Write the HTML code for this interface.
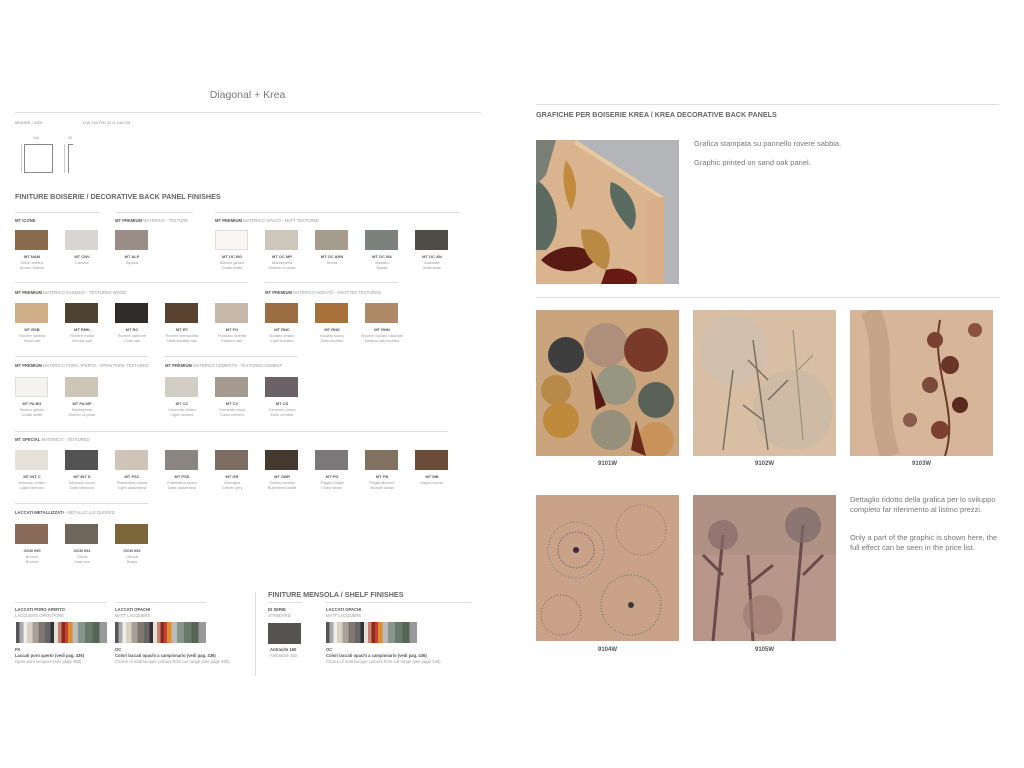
<!DOCTYPE html>
<html><head><meta charset="utf-8"><style>
*{margin:0;padding:0;box-sizing:border-box}
body{width:1024px;height:768px;background:#fff;position:relative;overflow:hidden;font-family:"Liberation Sans",sans-serif;color:#666}
.a{position:absolute}
.ln{position:absolute;height:1px;background:#ddd}
.t{position:absolute;font-size:4px;line-height:5px;color:#888;white-space:nowrap}
.lb{position:absolute;font-size:4.2px;color:#999;white-space:nowrap}
.lb b{color:#555}
.sw{position:absolute;width:33px;height:20px}
.cd{position:absolute;width:50px;margin-left:-8px;text-align:center;font-size:4px;line-height:5.5px;color:#999}
.cd b{color:#555;display:block}
.strip{position:absolute;height:21px;background:linear-gradient(90deg,#555 0 4%,#aaa 4% 8%,#eee 8% 12%,#d8d0c0 12% 18%,#a8a098 18% 25%,#807870 25% 32%,#666 32% 38%,#333 38% 42%,#e6e0d6 42% 46%,#c88070 46% 50%,#8a2a20 50% 54%,#c84030 54% 57%,#d89030 57% 62%,#bbb 62% 68%,#88958a 68% 76%,#6a7a6a 76% 84%,#556655 84% 92%,#999 92% 100%)}
.img{position:absolute;width:143px;height:146px;overflow:hidden}
.cap{position:absolute;font-size:6px;font-weight:bold;color:#555;width:143px;text-align:center}
.rt{position:absolute;font-size:7.5px;color:#777;line-height:10px}
</style></head><body>
<div class="a" style="left:0;top:89px;width:495px;text-align:center;font-size:10.5px;color:#777">Diagonal + Krea</div>
<div class="ln" style="left:15px;top:112px;width:466px"></div>
<div class="t" style="left:15px;top:120px">MISURE / SIZE</div>
<div class="t" style="left:83px;top:120px">L/W 144 P/D 22 H 144 CM</div>
<div class="t" style="left:33px;top:136px;font-size:3.5px">144</div>
<div class="t" style="left:68px;top:136px;font-size:3.5px">22</div>
<div class="a" style="left:24px;top:144px;width:29px;height:29px;border:1px solid #888"></div>
<div class="a" style="left:68px;top:144px;width:5px;height:29px;border-left:1px solid #888;border-top:1px solid #888"></div>
<div class="a" style="left:21px;top:144px;width:1px;height:29px;background:#ccc"></div>
<div class="a" style="left:64px;top:144px;width:1px;height:29px;background:#ccc"></div>
<div class="a" style="left:15px;top:192px;font-size:7.2px;font-weight:bold;color:#666">FINITURE BOISERIE / DECORATIVE BACK PANEL FINISHES</div>

<div class="ln" style="left:15px;top:212px;width:85px"></div>
<div class="ln" style="left:115px;top:212px;width:78px"></div>
<div class="ln" style="left:215px;top:212px;width:244px"></div>
<div class="lb" style="left:15px;top:218px"><b>MT ICONE</b></div>
<div class="lb" style="left:115px;top:218px"><b>MT PREMIUM</b> MATERICO - TEXTURE</div>
<div class="lb" style="left:215px;top:218px"><b>MT PREMIUM</b> MATERICO OPACO - MATT TEXTURED</div>
<div class="sw" style="left:15px;top:230px;background:#8a6a4c"></div>
<div class="sw" style="left:65px;top:230px;background:#d8d6d2"></div>
<div class="sw" style="left:115px;top:230px;background:#9a8c86"></div>
<div class="sw" style="left:215px;top:230px;background:#f7f6f2;border:1px solid #ddd"></div>
<div class="sw" style="left:265px;top:230px;background:#ccc6bb"></div>
<div class="sw" style="left:315px;top:230px;background:#a69c8e"></div>
<div class="sw" style="left:365px;top:230px;background:#7b817d"></div>
<div class="sw" style="left:415px;top:230px;background:#4f4c46"></div>
<div class="cd" style="left:15px;top:254px"><b>MT NAM</b>Noce ambra<br>Amber walnut</div>
<div class="cd" style="left:65px;top:254px"><b>MT CNV</b>Canvas</div>
<div class="cd" style="left:115px;top:254px"><b>MT ALP</b>Alpaca</div>
<div class="cd" style="left:215px;top:254px"><b>MT OC BG</b>Bianco gesso<br>Chalk white</div>
<div class="cd" style="left:265px;top:254px"><b>MT OC MP</b>Madreperla<br>Mother of pearl</div>
<div class="cd" style="left:315px;top:254px"><b>MT OC ARN</b>Arena</div>
<div class="cd" style="left:365px;top:254px"><b>MT OC BA</b>Basalto<br>Basalt</div>
<div class="cd" style="left:415px;top:254px"><b>MT OC AN</b>Antracite<br>Anthracite</div>

<div class="ln" style="left:15px;top:282px;width:233px"></div>
<div class="ln" style="left:265px;top:282px;width:133px"></div>
<div class="lb" style="left:15px;top:290px"><b>MT PREMIUM</b> MATERICO ESSENZA - TEXTURED WOOD</div>
<div class="lb" style="left:265px;top:290px"><b>MT PREMIUM</b> MATERICO NODATO - KNOTTED TEXTURED</div>
<div class="sw" style="left:15px;top:303px;background:#d0ae88"></div>
<div class="sw" style="left:65px;top:303px;background:#4e4232"></div>
<div class="sw" style="left:115px;top:303px;background:#2f2c2a"></div>
<div class="sw" style="left:165px;top:303px;background:#5a4230"></div>
<div class="sw" style="left:215px;top:303px;background:#c8b8aa"></div>
<div class="sw" style="left:265px;top:303px;background:#9a6e42"></div>
<div class="sw" style="left:315px;top:303px;background:#a8703a"></div>
<div class="sw" style="left:365px;top:303px;background:#b08a66"></div>
<div class="cd" style="left:15px;top:327px"><b>MT RSB</b>Rovere sabbia<br>Sand oak</div>
<div class="cd" style="left:65px;top:327px"><b>MT RMK</b>Rovere moka<br>Mocha oak</div>
<div class="cd" style="left:115px;top:327px"><b>MT RC</b>Rovere carbone<br>Coal oak</div>
<div class="cd" style="left:165px;top:327px"><b>MT RT</b>Rovere termocotto<br>Heat-treated oak</div>
<div class="cd" style="left:215px;top:327px"><b>MT FO</b>Frassino oriente<br>Eastern ash</div>
<div class="cd" style="left:265px;top:327px"><b>MT RNC</b>Nodato chiaro<br>Light knotted</div>
<div class="cd" style="left:315px;top:327px"><b>MT RNS</b>Nodato scuro<br>Dark knotted</div>
<div class="cd" style="left:365px;top:327px"><b>MT RNN</b>Rovere nodato naturale<br>Natural oak knotted</div>

<div class="ln" style="left:15px;top:356px;width:133px"></div>
<div class="ln" style="left:165px;top:356px;width:133px"></div>
<div class="lb" style="left:15px;top:363px"><b>MT PREMIUM</b> MATERICO PORO APERTO - OPEN PORE TEXTURED</div>
<div class="lb" style="left:165px;top:363px"><b>MT PREMIUM</b> MATERICO CEMENTO - TEXTURED CEMENT</div>
<div class="sw" style="left:15px;top:377px;background:#f4f3ef;border:1px solid #ddd"></div>
<div class="sw" style="left:65px;top:377px;background:#ccc5b8"></div>
<div class="sw" style="left:165px;top:377px;background:#d2cec6"></div>
<div class="sw" style="left:215px;top:377px;background:#a49a90"></div>
<div class="sw" style="left:265px;top:377px;background:#6a6266"></div>
<div class="cd" style="left:15px;top:401px"><b>MT PA BG</b>Bianco gesso<br>Chalk white</div>
<div class="cd" style="left:65px;top:401px"><b>MT PA MP</b>Madreperla<br>Mother of pearl</div>
<div class="cd" style="left:165px;top:401px"><b>MT CC</b>Cemento chiaro<br>Light cement</div>
<div class="cd" style="left:215px;top:401px"><b>MT CV</b>Cemento cava<br>Cava cement</div>
<div class="cd" style="left:265px;top:401px"><b>MT CS</b>Cemento scuro<br>Dark cement</div>

<div class="ln" style="left:15px;top:431px;width:433px"></div>
<div class="lb" style="left:15px;top:437px"><b>MT SPECIAL</b> MATERICO - TEXTURED</div>
<div class="sw" style="left:15px;top:450px;background:#e6e2da"></div>
<div class="sw" style="left:65px;top:450px;background:#535353"></div>
<div class="sw" style="left:115px;top:450px;background:#cfc4b8"></div>
<div class="sw" style="left:165px;top:450px;background:#8a8580"></div>
<div class="sw" style="left:215px;top:450px;background:#7c6e62"></div>
<div class="sw" style="left:265px;top:450px;background:#43392f"></div>
<div class="sw" style="left:315px;top:450px;background:#7a7878"></div>
<div class="sw" style="left:365px;top:450px;background:#827262"></div>
<div class="sw" style="left:415px;top:450px;background:#6a4c38"></div>
<div class="cd" style="left:15px;top:474px"><b>MT INT C</b>Intreccio chiaro<br>Light intreccio</div>
<div class="cd" style="left:65px;top:474px"><b>MT INT S</b>Intreccio scuro<br>Dark intreccio</div>
<div class="cd" style="left:115px;top:474px"><b>MT PSC</b>Piasentina chiara<br>Light piasentina</div>
<div class="cd" style="left:165px;top:474px"><b>MT PSS</b>Piasentina scura<br>Dark piasentina</div>
<div class="cd" style="left:215px;top:474px"><b>MT GR</b>Graniglia<br>Gravel grey</div>
<div class="cd" style="left:265px;top:474px"><b>MT OBR</b>Ossido brunito<br>Burnished oxide</div>
<div class="cd" style="left:315px;top:474px"><b>MT PG</b>Paglia Grigia<br>Grey straw</div>
<div class="cd" style="left:365px;top:474px"><b>MT PB</b>Paglia Bronzo<br>Bronze straw</div>
<div class="cd" style="left:415px;top:474px"><b>MT MB</b>Maya bronzo</div>

<div class="ln" style="left:15px;top:503px;width:133px"></div>
<div class="lb" style="left:15px;top:510px"><b>LACCATI METALLIZZATI</b> - METALLIC LACQUERED</div>
<div class="sw" style="left:15px;top:524px;background:#8a6a58"></div>
<div class="sw" style="left:65px;top:524px;background:#6e665a"></div>
<div class="sw" style="left:115px;top:524px;background:#7a6638"></div>
<div class="cd" style="left:15px;top:548px"><b>OCM 090</b>Bronzo<br>Bronze</div>
<div class="cd" style="left:65px;top:548px"><b>OCM 091</b>Ghisa<br>Cast iron</div>
<div class="cd" style="left:115px;top:548px"><b>OCM 092</b>Ottone<br>Brass</div>

<div class="ln" style="left:15px;top:602px;width:91px"></div>
<div class="ln" style="left:115px;top:602px;width:91px"></div>
<div class="a" style="left:255px;top:592px;width:1px;height:84px;background:#ddd"></div>
<div class="a" style="left:268px;top:590px;font-size:7.2px;font-weight:bold;color:#666">FINITURE MENSOLA / SHELF FINISHES</div>
<div class="ln" style="left:268px;top:602px;width:34px"></div>
<div class="ln" style="left:326px;top:602px;width:145px"></div>
<div class="lb" style="left:15px;top:607px;line-height:6px"><b>LACCATI PORO APERTO</b><br>LACQUERS OPEN PORE</div>
<div class="lb" style="left:115px;top:607px;line-height:6px"><b>LACCATI OPACHI</b><br>MATT LACQUERS</div>
<div class="lb" style="left:268px;top:607px;line-height:6px"><b>DI SERIE</b><br>STANDARD</div>
<div class="lb" style="left:326px;top:607px;line-height:6px"><b>LACCATI OPACHI</b><br>MATT LACQUERS</div>
<div class="strip" style="left:16px;top:622px;width:91px"></div>
<div class="strip" style="left:115px;top:622px;width:91px"></div>
<div class="sw" style="left:268px;top:623px;background:#555350;height:21px"></div>
<div class="strip" style="left:326px;top:622px;width:91px"></div>
<div class="lb" style="left:15px;top:647px;line-height:6px"><b>PA<br>Laccati poro aperto (vedi pag. 436)</b><br>Open-pore lacquers (see page 436)</div>
<div class="lb" style="left:115px;top:647px;line-height:6px"><b>OC<br>Colori laccati opachi a campionario (vedi pag. 436)</b><br>Choice of matt lacquer colours from our range (see page 436)</div>
<div class="lb" style="left:270px;top:647px;line-height:6px"><b>Antracite 160</b><br>Anthracite 160</div>
<div class="lb" style="left:326px;top:647px;line-height:6px"><b>OC<br>Colori laccati opachi a campionario (vedi pag. 436)</b><br>Choice of matt lacquer colours from our range (see page 436)</div>

<div class="ln" style="left:536px;top:104px;width:463px"></div>
<div class="a" style="left:536px;top:110px;font-size:7.2px;font-weight:bold;color:#666">GRAFICHE PER BOISERIE KREA / KREA DECORATIVE BACK PANELS</div>
<svg class="a" style="left:536px;top:140px" width="143" height="144" viewBox="0 0 143 144">
<rect width="143" height="144" fill="#b3b5b8"/>
<polygon points="0,0 40,0 128,57 128,144 0,144" fill="#d9b48e"/>
<polygon points="122,57 128,57 128,144 110,144 110,62" fill="#d9b08a"/>
<polygon points="40,0 128,57 122,57 38,4" fill="#e8c9a4"/>
<path d="M75 42 C100 50 105 80 95 90 C85 80 70 60 75 42Z" fill="#5a6b62"/>
<path d="M0 40 C20 50 30 90 10 110 L0 110Z" fill="#5c6a62"/>
<path d="M30 20 C45 40 40 60 35 70 C28 55 25 35 30 20Z" fill="#c28a3c"/>
<path d="M5 120 C25 100 55 105 60 120 C45 135 20 135 5 120Z" fill="#5a1a14"/>
<path d="M45 90 C70 85 80 110 70 130 C55 125 45 110 45 90Z" fill="#b88a44"/>
<path d="M70 130 C90 125 105 135 100 144 L65 144Z" fill="#6a1a14"/>
<path d="M0 0 L20 0 L10 35 L0 45Z" fill="#7a7e74"/>
</svg>
<div class="rt" style="left:694px;top:139px">Grafica stampata su pannello rovere sabbia.</div>
<div class="rt" style="left:694px;top:158px">Graphic printed on sand oak panel.</div>
<div class="ln" style="left:536px;top:297px;width:463px"></div>

<svg class="img" style="left:536px;top:310px" viewBox="0 0 143 146">
<rect width="143" height="146" fill="#c9a47c"/>
<circle cx="70" cy="35" r="22" fill="#a88a7a" opacity=".8"/>
<circle cx="30" cy="45" r="18" fill="#3e3e3e"/>
<circle cx="110" cy="40" r="22" fill="#7a3a2a"/>
<circle cx="20" cy="80" r="15" fill="#b88a4a"/>
<circle cx="80" cy="75" r="20" fill="#8a9282" opacity=".8"/>
<circle cx="120" cy="90" r="18" fill="#5a6258"/>
<circle cx="25" cy="110" r="18" fill="#c08a3c"/>
<circle cx="75" cy="120" r="20" fill="#8a8a7a" opacity=".8"/>
<circle cx="120" cy="130" r="18" fill="#c8925a"/>
<path d="M55 60 L70 95 L60 100Z" fill="#5a1a14"/>
<path d="M100 110 L110 146 L95 140Z" fill="#6a2a1a"/>
</svg>
<svg class="img" style="left:693px;top:310px" viewBox="0 0 143 146">
<rect width="143" height="146" fill="#d8bea2"/>
<circle cx="40" cy="40" r="35" fill="#cdbfb0" opacity=".7"/>
<circle cx="100" cy="100" r="40" fill="#c9b9a6" opacity=".7"/>
<path d="M60 30 L75 140 M75 70 L55 50 M75 90 L95 70 M70 110 L50 95 M40 60 L30 140" stroke="#7a7060" stroke-width="1.5" fill="none"/>
<path d="M100 20 L110 130 M105 60 L120 45" stroke="#9a9080" stroke-width="1.2" fill="none"/>
</svg>
<svg class="img" style="left:850px;top:310px" viewBox="0 0 143 146">
<rect width="143" height="146" fill="#d6b598"/>
<path d="M20 0 C40 40 20 80 40 146" stroke="#c7a488" stroke-width="20" fill="none"/>
<path d="M90 10 C80 60 110 100 95 146" stroke="#6a3a2a" stroke-width="2" fill="none"/>
<circle cx="85" cy="30" r="8" fill="#7a4030"/><circle cx="100" cy="55" r="9" fill="#6a3428"/>
<circle cx="80" cy="75" r="8" fill="#7a4a3a"/><circle cx="110" cy="95" r="8" fill="#5a2a20"/>
<circle cx="90" cy="120" r="9" fill="#7a4030"/><circle cx="125" cy="20" r="7" fill="#8a5040"/>
<circle cx="60" cy="110" r="7" fill="#8a5a4a"/>
</svg>
<div class="cap" style="left:536px;top:461px">9101W</div>
<div class="cap" style="left:693px;top:461px">9102W</div>
<div class="cap" style="left:850px;top:461px">9103W</div>

<svg class="img" style="left:536px;top:495px" viewBox="0 0 143 146">
<rect width="143" height="146" fill="#caa288"/>
<g fill="none" stroke-width="1">
<circle cx="40" cy="55" r="28" stroke="#6a7a8a" stroke-dasharray="1 2"/>
<circle cx="40" cy="55" r="18" stroke="#3a4a6a" stroke-dasharray="1 2"/>
<circle cx="105" cy="35" r="25" stroke="#8a6a6a" stroke-dasharray="1 2"/>
<circle cx="95" cy="110" r="30" stroke="#5a6a6a" stroke-dasharray="1 2"/>
<circle cx="25" cy="120" r="20" stroke="#7a5a5a" stroke-dasharray="1 2"/>
</g>
<circle cx="40" cy="55" r="3" fill="#3a2a4a"/><circle cx="95" cy="110" r="3" fill="#3a3a3a"/>
</svg>
<svg class="img" style="left:693px;top:495px" viewBox="0 0 143 146">
<rect width="143" height="146" fill="#b8968a"/>
<rect x="0" y="0" width="143" height="60" fill="#a89080" opacity=".6"/>
<path d="M20 146 L30 40 M60 146 L55 60 M100 146 L110 30 M30 80 L10 60 M55 90 L80 70 M110 80 L130 60" stroke="#6a4a4a" stroke-width="3" fill="none"/>
<circle cx="30" cy="40" r="15" fill="#8a6a6a" opacity=".7"/><circle cx="110" cy="30" r="18" fill="#7a6a6a" opacity=".7"/>
<circle cx="70" cy="120" r="20" fill="#a07a70" opacity=".7"/>
</svg>
<div class="cap" style="left:536px;top:647px">9104W</div>
<div class="cap" style="left:693px;top:647px">9105W</div>
<div class="rt" style="left:850px;top:495px;width:152px">Dettaglio ridotto della grafica per lo sviluppo completo far riferimento al listino prezzi.</div>
<div class="rt" style="left:850px;top:533px;width:152px">Only a part of the graphic is shown here, the full effect can be seen in the price list.</div>
</body></html>
